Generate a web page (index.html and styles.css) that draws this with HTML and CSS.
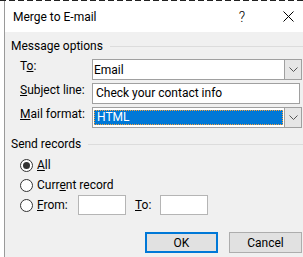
FILE: index.html
```html
<!DOCTYPE html>
<html lang="en">
<head>
    <meta charset="UTF-8">
    <meta name="viewport" content="width=device-width, initial-scale=1.0">
    <title>Merge to E-mail</title>
    <link rel="stylesheet" href="styles.css">
</head>
<body>
    <div class="doc-top"></div>
    <div class="screen">
        <div class="doc-side"></div>
        <div class="dialog">
            <div class="titlebar">
                <div class="title">Merge to E-mail</div>
                <div class="tbtn">?</div>
                <div class="tbtn">
                    <svg width="11" height="11" viewBox="0 0 11 11"><path d="M0.5 0.5 L10.5 10.5 M10.5 0.5 L0.5 10.5" stroke="#000" stroke-width="1"/></svg>
                </div>
            </div>
            <div class="content">
                <div class="legend"><span>Message options</span></div>
                <div class="rows">
                    <div class="label">T<u>o</u>:</div>
                    <div class="combo">
                        <div class="value">Email</div>
                        <div class="arrow"><svg width="9" height="5" viewBox="0 0 9 5"><path d="M0.5 0.5 L4.5 4.5 L8.5 0.5" fill="none" stroke="#555"/></svg></div>
                    </div>
                    <div class="label"><u>S</u>ubject line:</div>
                    <div class="textbox">Check your contact info</div>
                    <div class="label"><u>M</u>ail format:</div>
                    <div class="combo">
                        <div class="value"><span class="selected">HTML</span></div>
                        <div class="arrow"><svg width="9" height="5" viewBox="0 0 9 5"><path d="M0.5 0.5 L4.5 4.5 L8.5 0.5" fill="none" stroke="#555"/></svg></div>
                    </div>
                </div>
                <div class="legend second"><span>Send records</span></div>
                <div class="radios">
                    <div class="radio-row"><span class="radio checked"></span><span><u>A</u>ll</span></div>
                    <div class="radio-row"><span class="radio"></span><span>Curr<u>e</u>nt record</span></div>
                    <div class="radio-row">
                        <span class="radio"></span><span class="from-label"><u>F</u>rom:</span>
                        <div class="small-box"></div>
                        <span class="to-label"><u>T</u>o:</span>
                        <div class="small-box"></div>
                    </div>
                </div>
                <div class="buttons">
                    <div class="btn default">OK</div>
                    <div class="btn">Cancel</div>
                </div>
            </div>
        </div>
    </div>
</body>
</html>
```

FILE: styles.css
```css
body{
    margin: 0;
    background-color: #fff;
    font-family: Roboto, "Noto Sans", sans-serif;
    font-size: 12px;
    color: #000;
    overflow: hidden;
    width: 303px;
    height: 257px;
}
.doc-top{
    height: 1px;
    background: repeating-linear-gradient(90deg, #222 0 6px, #fff 6px 9px);
}
.screen{
    display: flex;
}
.doc-side{
    width: 4px;
    flex-shrink: 0;
}
.dialog{
    width: 306px;
    flex-shrink: 0;
    border-left: 1px solid #9a9a9a;
    height: 256px;
    background-color: #f0f0f0;
}
.titlebar{
    height: 31px;
    background-color: #fff;
    display: flex;
    align-items: center;
}
.title{
    flex: 1;
    padding-left: 8px;
    font-size: 12px;
}
.tbtn{
    width: 46px;
    text-align: center;
    font-size: 14px;
    font-weight: 300;
    display: flex;
    justify-content: center;
    align-items: center;
}
.content{
    padding: 6px 0 0 0;
}
.legend{
    display: flex;
    align-items: center;
    height: 16px;
    padding-left: 6px;
}
.legend::after{
    content: "";
    flex: 1;
    border-top: 1px solid #dcdcdc;
    margin-left: 7px;
}
.legend.second{
    margin-top: 8px;
}
.rows{
    display: grid;
    grid-template-columns: 72px 210px;
    row-gap: 3px;
    margin-top: 5px;
    padding-left: 15px;
}
.label{
    height: 21px;
    line-height: 15px;
}
.combo{
    height: 21px;
    box-sizing: border-box;
    border: 1px solid #a0a0a0;
    background-color: #fff;
    display: flex;
}
.combo .value{
    flex: 1;
    padding: 1px 1px;
    display: flex;
    align-items: center;
}
.combo:first-of-type .value{
    padding-left: 3px;
}
.arrow{
    width: 16px;
    background-color: #e6e6e6;
    border-left: 1px solid #a0a0a0;
    display: flex;
    align-items: center;
    justify-content: center;
}
.selected{
    display: block;
    width: 100%;
    height: 15px;
    line-height: 13px;
    box-sizing: border-box;
    background-color: #0078d7;
    color: #fff;
    padding-left: 2px;
    border: 1px dotted #f7a13a;
}
.textbox{
    height: 21px;
    box-sizing: border-box;
    border: 1px solid #a0a0a0;
    background-color: #fff;
    padding-left: 3px;
    line-height: 18px;
    width: 208px;
}
.radios{
    margin-top: 3px;
    padding-left: 15px;
}
.radio-row{
    display: flex;
    align-items: center;
    height: 20px;
}
.radio{
    width: 13px;
    height: 13px;
    box-sizing: border-box;
    border: 1px solid #333;
    border-radius: 50%;
    background-color: #fff;
    margin-right: 4px;
    display: flex;
    align-items: center;
    justify-content: center;
}
.radio.checked::after{
    content: "";
    width: 7px;
    height: 7px;
    border-radius: 50%;
    background-color: #333;
}
.from-label{
    width: 41px;
}
.small-box{
    width: 48px;
    height: 20px;
    box-sizing: border-box;
    border: 1px solid #b5b5b5;
    background-color: #fff;
}
.to-label{
    margin-left: 9px;
    width: 25px;
}
.buttons{
    display: flex;
    gap: 11px;
    margin-top: 17px;
    padding-left: 140px;
}
.btn{
    width: 73px;
    height: 21px;
    box-sizing: border-box;
    border: 1px solid #adadad;
    background-color: #e1e1e1;
    display: flex;
    align-items: center;
    justify-content: center;
}
.btn.default{
    border: 2px solid #0078d7;
}
```
